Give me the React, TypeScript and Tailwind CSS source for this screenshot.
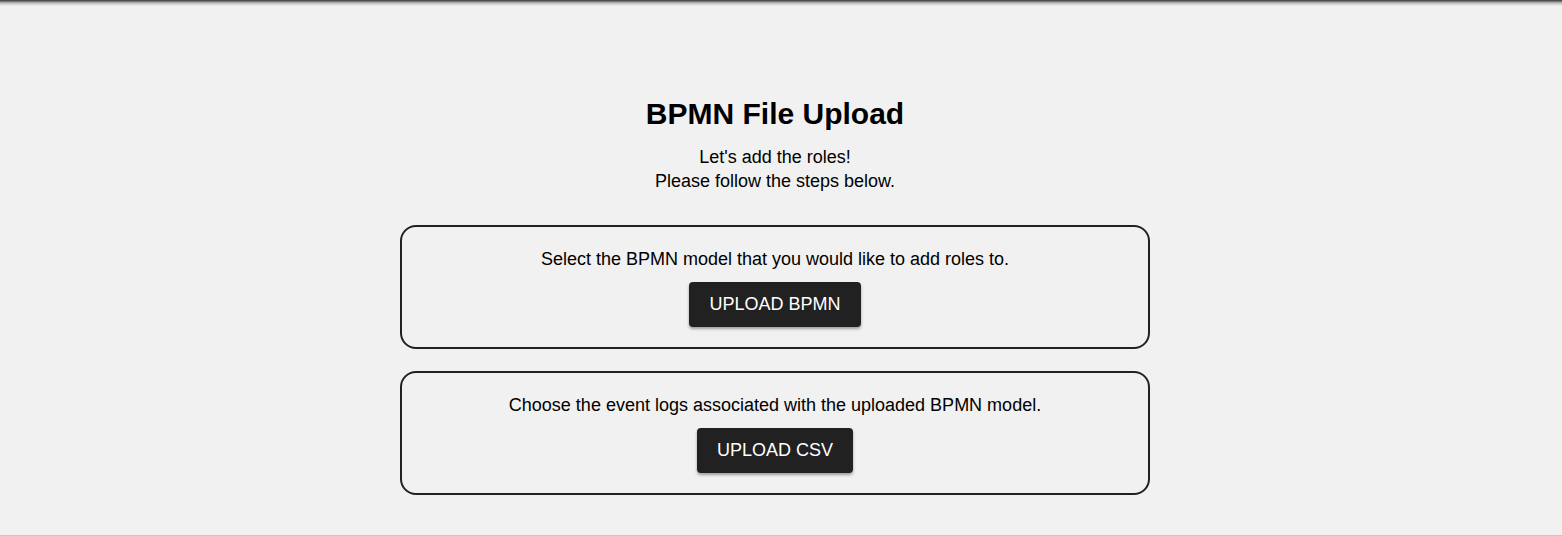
const steps = [
  {
    text: "Select the BPMN model that you would like to add roles to.",
    button: "Upload BPMN",
  },
  {
    text: "Choose the event logs associated with the uploaded BPMN model.",
    button: "Upload CSV",
  },
];

export default function App() {
  return (
    <div className="h-[536px] bg-[#f1f1f1] font-['Liberation_Sans',Arial,sans-serif] text-black flex flex-col">
      {/* app bar shadow peeking in from above */}
      <div className="h-[6px] bg-gradient-to-b from-[#3a3a3a] via-[#bdbdbd] to-[#f1f1f1]" />

      <div className="flex-1 flex flex-col items-center pt-[90px] pr-[12px] border-b border-[#c9c9c9]">
        <h1 className="text-[30px] leading-[36px] font-bold">BPMN File Upload</h1>
        <div className="mt-[13px] text-center text-[18px] leading-[24px]">
          <p>Let's add the roles!</p>
          <p>Please follow the steps below.</p>
        </div>

        <div className="mt-[32px] w-[750px] flex flex-col gap-[22px]">
          {steps.map((s) => (
            <div
              key={s.button}
              className="border-2 border-[#222] rounded-[16px] px-5 pt-5 pb-5 flex flex-col items-center"
            >
              <p className="text-[18px] leading-[24px]">{s.text}</p>
              <button className="mt-[11px] h-[45px] px-5 rounded-[4px] bg-[#212121] text-white text-[18px] uppercase shadow-[0_2px_3px_rgba(0,0,0,0.35)]">
                {s.button}
              </button>
            </div>
          ))}
        </div>
      </div>
    </div>
  );
}
